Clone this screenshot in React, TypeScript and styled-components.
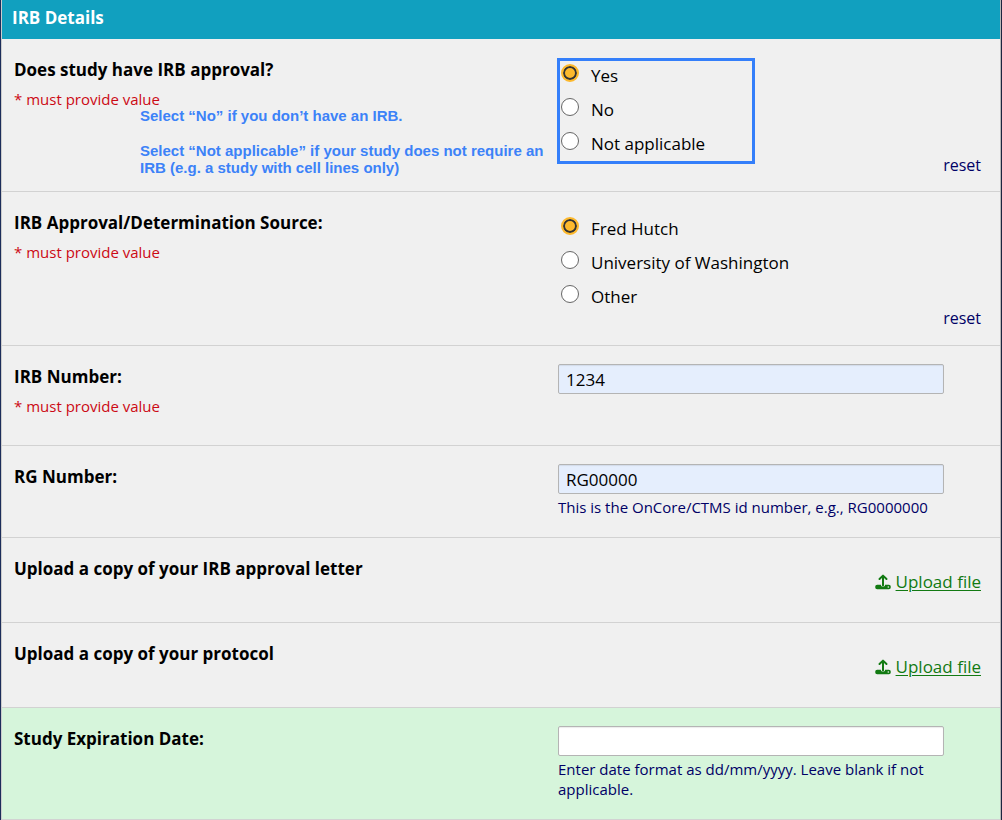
import React, { useState } from "react";
import styled, { createGlobalStyle } from "styled-components";

const GlobalStyle = createGlobalStyle`
  *, *::before, *::after { box-sizing: border-box; }
  body {
    margin: 0;
    background: #f0f0f0;
    color: #000;
    font-family: "Open Sans", sans-serif;
    font-size: 17px;
    line-height: 24px;
  }
`;

const Form = styled.form`
  border-left: 1px solid #1c2d5a;
  border-right: 1px solid #1c2540;
`;

const Sheet = styled.div`
  border-left: 1px solid #cccccc;
  border-right: 1px solid #b8b8b8;
`;

const SectionHeader = styled.h2`
  margin: 0;
  padding: 6px 10px 9px;
  background: #11a0bf;
  color: #fff;
  font-size: 17px;
  line-height: 24px;
  font-weight: 700;
`;

const Row = styled.div<{ $bottom?: number; $highlight?: boolean }>`
  display: grid;
  grid-template-columns: minmax(0, 544fr) minmax(0, 423fr);
  padding: 18px 19px ${(p) => p.$bottom ?? 29}px 12px;
  border-bottom: 1px solid #d2d2d2;
  background: ${(p) => (p.$highlight ? "#d6f5db" : "#f0f0f0")};
`;

const Cell = styled.div`
  position: relative;
  min-width: 0;
`;

const Question = styled.label`
  display: block;
  padding-top: 1px;
  font-weight: 700;
`;

const Required = styled.div`
  margin-top: 7px;
  color: #cc0a14;
  font-size: 15px;
  line-height: 20px;
`;

const Callout = styled.div`
  position: absolute;
  top: 50px;
  left: 126px;
  width: 412px;
  color: #3c82f8;
  font-family: "Liberation Sans", Arial, sans-serif;
  font-size: 15px;
  line-height: 17px;
  font-weight: 700;

  p { margin: 0 0 18px; }
`;

const CalloutFrame = styled.div`
  position: absolute;
  top: 1px;
  left: -1px;
  width: 198px;
  height: 106px;
  border: 3px solid #347ffa;
  pointer-events: none;
`;

const Options = styled.div`
  display: flex;
  flex-direction: column;
  gap: 10px;
  padding: 7px 0 0 3px;
`;

const Option = styled.label`
  display: flex;
  align-items: flex-start;
  gap: 12px;
`;

const Radio = styled.input`
  appearance: none;
  flex: none;
  width: 18px;
  height: 18px;
  margin: 0;
  border: 1px solid #666;
  border-radius: 50%;
  background: #fff;

  &:checked {
    border: 2px solid #fdb92d;
    background: #fdb92d;
    box-shadow: inset 0 0 0 2px #333;
  }
`;

const ResetButton = styled.button`
  display: block;
  margin: 0 0 0 auto;
  padding: 0;
  border: 0;
  background: none;
  color: #000066;
  font: inherit;
  font-size: 16px;
  line-height: 18px;
  cursor: pointer;
`;

const TextInput = styled.input`
  display: block;
  width: 100%;
  max-width: 386px;
  height: 30px;
  padding: 1px 7px 0;
  border: 1px solid #b4b4b4;
  border-radius: 2px;
  background: ${(p) => (p.value ? "#e5eefd" : "#fff")};
  box-shadow: inset 0 1px 1px rgba(0, 0, 0, 0.08);
  color: #000;
  font: inherit;
`;

const Hint = styled.div`
  max-width: 386px;
  margin-top: 3px;
  color: #000066;
  font-size: 15px;
  line-height: 20px;
`;

const UploadCell = styled(Cell)`
  display: flex;
  justify-content: flex-end;
  padding-top: 14px;
`;

const UploadLink = styled.a`
  display: flex;
  align-items: center;
  gap: 5px;
  color: #127a12;
  text-decoration: none;

  span {
    text-decoration: underline;
    text-underline-offset: 2px;
    text-decoration-thickness: 1px;
  }
`;

const UploadIcon = () => (
  <svg width="16" height="16" viewBox="0 0 16 16" fill="none" aria-hidden="true">
    <path
      d="M4.500 5 8 1.600 11.500 5M8 2v9.500"
      stroke="currentColor"
      strokeWidth="2"
      strokeLinecap="round"
      strokeLinejoin="round"
    />
    <path
      d="M2.200 10.800H6v.5c0 .9.8 1.400 2 1.400s2-.5 2-1.400v-.5h3.800a2 2 0 0 1 2 2v.4a2 2 0 0 1-2 2H2.200a2 2 0 0 1-2-2v-.4a2 2 0 0 1 2-2Z"
      fill="currentColor"
    />
    <circle cx="13.300" cy="13" r=".8" fill="#f0f0f0" />
  </svg>
);

interface ChoiceProps {
  name: string;
  options: string[];
}

const Choice = ({ name, options }: ChoiceProps) => {
  const [value, setValue] = useState(options[0]);
  return (
    <>
      <Options role="radiogroup" aria-labelledby={`${name}-label`}>
        {options.map((option) => (
          <Option key={option}>
            <Radio
              type="radio"
              name={name}
              checked={value === option}
              onChange={() => setValue(option)}
            />
            {option}
          </Option>
        ))}
      </Options>
      <ResetButton type="button" onClick={() => setValue("")}>
        reset
      </ResetButton>
    </>
  );
};

const Field = ({ id, initial = "" }: { id: string; initial?: string }) => {
  const [value, setValue] = useState(initial);
  return (
    <TextInput id={id} type="text" value={value} onChange={(e) => setValue(e.target.value)} />
  );
};

const UploadRow = ({ id, title }: { id: string; title: string }) => (
  <Row $bottom={28}>
    <Cell>
      <Question as="div" id={id}>
        {title}
      </Question>
    </Cell>
    <UploadCell>
      <UploadLink href="#upload" aria-describedby={id}>
        <UploadIcon />
        <span>Upload file</span>
      </UploadLink>
    </UploadCell>
  </Row>
);

export default function App() {
  return (
    <Form>
      <GlobalStyle />
      <Sheet>
        <SectionHeader>IRB Details</SectionHeader>
        <Row $bottom={17}>
          <Cell>
            <Question as="div" id="approval-label">
              Does study have IRB approval?
            </Question>
            <Required>* must provide value</Required>
            <Callout>
              <p>Select “No” if you don’t have an IRB.</p>
              <p>
                Select “Not applicable” if your study does not require an IRB (e.g. a study with
                cell lines only)
              </p>
            </Callout>
          </Cell>
          <Cell>
            <Choice name="approval" options={["Yes", "No", "Not applicable"]} />
            <CalloutFrame />
          </Cell>
        </Row>
        <Row $bottom={18}>
          <Cell>
            <Question as="div" id="source-label">
              IRB Approval/Determination Source:
            </Question>
            <Required>* must provide value</Required>
          </Cell>
          <Cell>
            <Choice name="source" options={["Fred Hutch", "University of Washington", "Other"]} />
          </Cell>
        </Row>
        <Row>
          <Cell>
            <Question htmlFor="irb-number">IRB Number:</Question>
            <Required>* must provide value</Required>
          </Cell>
          <Cell>
            <Field id="irb-number" initial="1234" />
          </Cell>
        </Row>
        <Row $bottom={20}>
          <Cell>
            <Question htmlFor="rg-number">RG Number:</Question>
          </Cell>
          <Cell>
            <Field id="rg-number" initial="RG00000" />
            <Hint>This is the OnCore/CTMS id number, e.g., RG0000000</Hint>
          </Cell>
        </Row>
        <UploadRow id="letter-label" title="Upload a copy of your IRB approval letter" />
        <UploadRow id="protocol-label" title="Upload a copy of your protocol" />
        <Row $bottom={20} $highlight>
          <Cell>
            <Question htmlFor="expiration">Study Expiration Date:</Question>
          </Cell>
          <Cell>
            <Field id="expiration" />
            <Hint>Enter date format as dd/mm/yyyy. Leave blank if not applicable.</Hint>
          </Cell>
        </Row>
      </Sheet>
    </Form>
  );
}
